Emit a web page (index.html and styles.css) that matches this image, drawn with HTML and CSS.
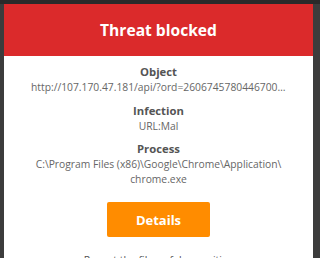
FILE: index.html
```html
<!DOCTYPE html>
<html lang="en">
<head>
  <meta charset="UTF-8">
  <title>Threat blocked</title>
  <link rel="stylesheet" href="styles.css">
</head>
<body>

<div class="window">
  <div class="popup">
    <div class="header">Threat blocked</div>
    <div class="content">
      <div class="field">
        <div class="label">Object</div>
        <div class="value ellipsis">http://107.170.47.181/api/?ord=26067457804467001234567</div>
      </div>
      <div class="field">
        <div class="label">Infection</div>
        <div class="value">URL:Mal</div>
      </div>
      <div class="field">
        <div class="label">Process</div>
        <div class="value path">C:\Program Files (x86)\Google\Chrome\Application\<wbr>chrome.exe</div>
      </div>
      <button class="details">Details</button>
      <a class="report" href="#">Report the file as false positive</a>
    </div>
  </div>
</div>

</body>
</html>
```

FILE: styles.css
```css
html, body {
  margin: 0;
  padding: 0;
}

body {
  font-family: 'Open Sans', 'Liberation Sans', sans-serif;
  background-color: #3b3b3b;
  width: 320px;
  height: 258px;
  overflow: hidden;
}

.window {
  padding: 4px 7px 0 4px;
  background: linear-gradient(#2a2a2a 0, #2a2a2a 4px, #3c3c3c 4px);
  height: 258px;
  box-sizing: border-box;
}

.popup {
  background-color: #ffffff;
  height: 100%;
}

.header {
  background-color: #db2a2b;
  color: #fff;
  font-weight: 700;
  font-size: 15.6px;
  height: 52px;
  line-height: 53px;
  text-align: center;
}

.content {
  padding: 8px 24px 0 24px;
  display: flex;
  flex-direction: column;
  align-items: center;
  text-align: center;
}

.field {
  width: 100%;
  margin-bottom: 8px;
}

.label {
  color: #555;
  font-weight: 700;
  font-size: 11.3px;
  line-height: 16px;
}

.value {
  color: #666;
  font-size: 10.3px;
  line-height: 14.5px;
}

.ellipsis {
  white-space: nowrap;
  overflow: hidden;
  text-overflow: ellipsis;
  padding: 0 2px 0 3px;
}

.path {
  padding: 0 4px;
}

.details {
  margin-top: 8px;
  width: 103px;
  height: 35px;
  border: none;
  border-radius: 2px;
  background-color: #ff8c00;
  color: #fff;
  font-family: inherit;
  font-weight: 700;
  font-size: 13px;
  cursor: pointer;
}

.report {
  margin-top: 16px;
  color: #555;
  font-size: 10.5px;
  text-decoration: none;
}
```
